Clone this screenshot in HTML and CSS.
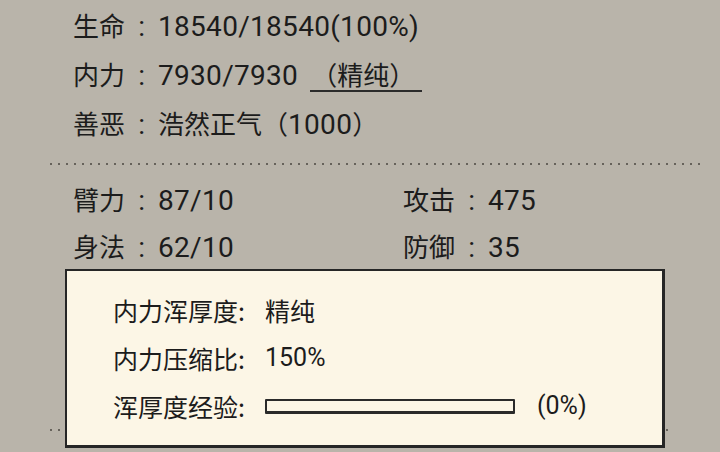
FILE: index.html
```html
<!DOCTYPE html>
<html lang="zh-CN">
<head>
<meta charset="utf-8">
<link rel="stylesheet" href="styles.css">
</head>
<body>
<div class="panel">
  <div class="row"><span class="k">生命</span><span class="c">:</span><span class="n">18540/18540(100%)</span></div>
  <div class="row"><span class="k">内力</span><span class="c">:</span><span class="n">7930/7930</span><span class="tag">（精纯）</span></div>
  <div class="row"><span class="k">善恶</span><span class="c">:</span><span class="k">浩然正气（</span><span class="n">1000</span><span class="k">）</span></div>
  <div class="dots"></div>
  <div class="grid">
    <div class="row"><span class="k">臂力</span><span class="c">:</span><span class="n">87/10</span></div>
    <div class="row"><span class="k">攻击</span><span class="c">:</span><span class="n">475</span></div>
    <div class="row"><span class="k">身法</span><span class="c">:</span><span class="n">62/10</span></div>
    <div class="row"><span class="k">防御</span><span class="c">:</span><span class="n">35</span></div>
  </div>
  <div class="dots dots2"></div>
</div>
<div class="tip">
  <div class="trow"><span class="tk">内力浑厚度:</span><span class="tv">精纯</span></div>
  <div class="trow"><span class="tk">内力压缩比:</span><span class="tn">150%</span></div>
  <div class="trow"><span class="tk">浑厚度经验:</span><span class="bar"></span><span class="tn pct">(0%)</span></div>
</div>
</body>
</html>
```
FILE: styles.css
```css
html, body {
  margin: 0;
  padding: 0;
}
body {
  width: 720px;
  height: 452px;
  overflow: hidden;
  background: #b9b4aa;
  color: #1c1c1c;
  position: relative;
  font-family: "Noto Sans CJK SC", "Noto Sans", sans-serif;
}
.panel {
  padding-left: 73px;
}
.row {
  height: 49px;
  line-height: 49px;
  white-space: nowrap;
}
.k {
  font-family: "Noto Sans CJK SC", sans-serif;
  font-size: 26px;
}
.c {
  display: inline-block;
  width: 33px;
  text-align: center;
  font-family: Roboto, sans-serif;
  font-size: 28px;
}
.n {
  font-family: Roboto, sans-serif;
  font-size: 28px;
  letter-spacing: 0.3px;
}
.tag {
  display: inline-block;
  margin-left: 12px;
  padding: 0 7px 0 1px;
  line-height: 32px;
  font-size: 26px;
  border-bottom: 2px solid #2b2b2b;
}
.dots {
  margin: 16px 20px 10px -23px;
  height: 2px;
  background-image: repeating-linear-gradient(to right, #66625b 0 2px, transparent 2px 8px);
}
.grid {
  display: grid;
  grid-template-columns: 330px 1fr;
}
.grid .row {
  height: 47px;
  line-height: 47px;
}
.dots2 {
  margin-top: 160px;
  margin-right: 48px;
}
.tip {
  position: absolute;
  left: 65px;
  top: 269px;
  background: #fcf6e6;
  border: 2px solid #262626;
  border-right-width: 3px;
  border-bottom-width: 3px;
  padding: 15px 0 0 46px;
  box-sizing: content-box;
  width: 549px;
  height: 159px;
}
.trow {
  height: 48px;
  line-height: 48px;
  white-space: nowrap;
  display: flex;
  align-items: center;
}
.tk {
  width: 152px;
  font-size: 25px;
}
.tv {
  font-size: 25px;
}
.tn {
  font-family: Roboto, sans-serif;
  font-size: 25px;
}
.bar {
  width: 246px;
  height: 10px;
  border: 2px solid #2a2a2a;
  border-bottom-width: 3px;
  border-radius: 1px;
  background: #fcf6e6;
}
.pct {
  margin-left: 22px;
}
```
